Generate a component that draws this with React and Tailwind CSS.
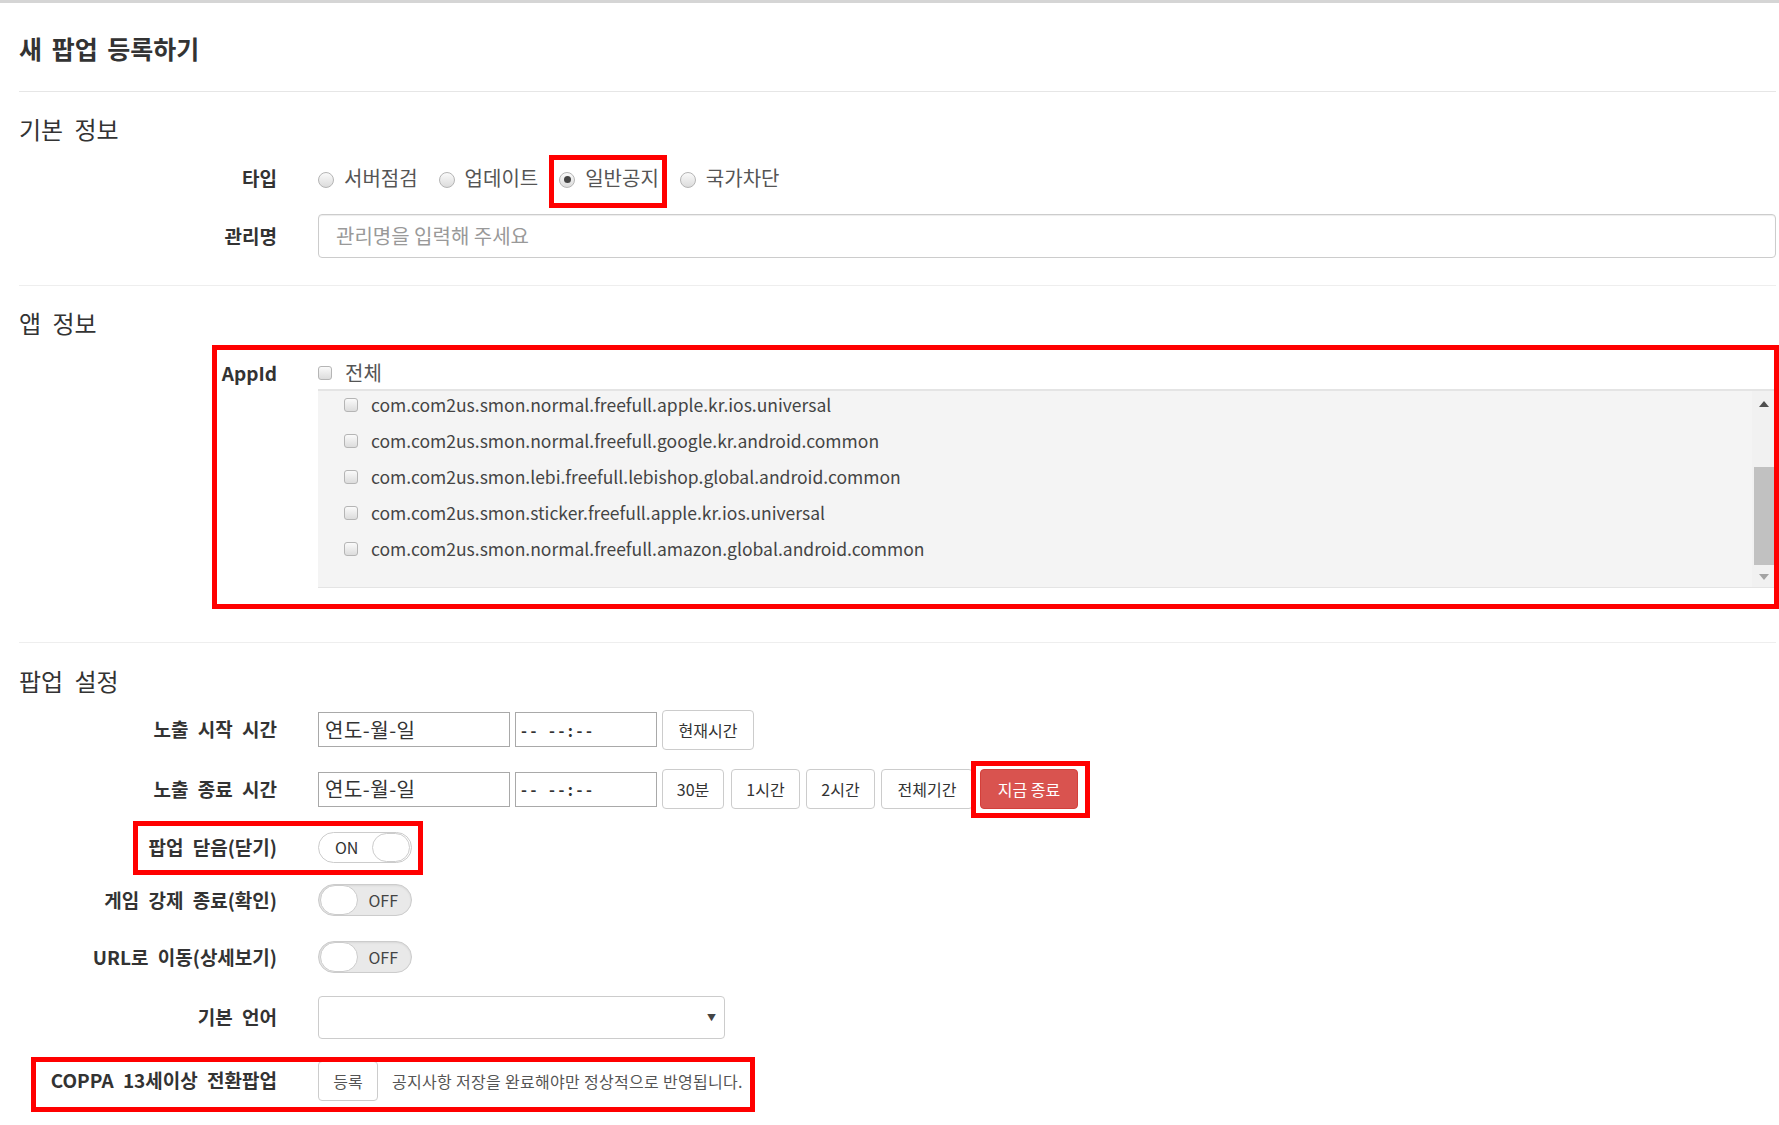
import { useState } from 'react';

const appIds = [
  'com.com2us.smon.normal.freefull.apple.kr.ios.universal',
  'com.com2us.smon.normal.freefull.google.kr.android.common',
  'com.com2us.smon.lebi.freefull.lebishop.global.android.common',
  'com.com2us.smon.sticker.freefull.apple.kr.ios.universal',
  'com.com2us.smon.normal.freefull.amazon.global.android.common',
];

function Radio({ checked }) {
  return (
    <span className="w-[16px] h-[16px] mt-[3px] rounded-full border border-[#b5b5b5] bg-gradient-to-b from-[#fafafa] to-[#dcdcdc] flex items-center justify-center shrink-0">
      {checked && <span className="w-[7px] h-[7px] rounded-full bg-[#444]" />}
    </span>
  );
}

function Check() {
  return (
    <span className="w-[14px] h-[14px] rounded-[3px] border border-[#b5b5b5] bg-gradient-to-b from-[#fafafa] to-[#dcdcdc] shrink-0" />
  );
}

function Toggle({ on }) {
  if (on) {
    return (
      <div className="w-[94px] h-[31px] rounded-full border border-[#ccc] bg-white flex items-center justify-between pl-[16px] pr-px">
        <span className="text-[16px] text-[#333]">ON</span>
        <span className="w-[38px] h-[29px] rounded-full border border-[#ccc] bg-white" />
      </div>
    );
  }
  return (
    <div className="w-[94px] h-[32px] rounded-full border border-[#ccc] bg-[#e9e9e9] flex items-center justify-between pl-px pr-[13px] shadow-[inset_0_1px_2px_rgba(0,0,0,0.08)]">
      <span className="w-[38px] h-[30px] rounded-full border border-[#ccc] bg-white" />
      <span className="text-[16px] text-[#444]">OFF</span>
    </div>
  );
}

function Row({ label, className = '', children }) {
  return (
    <div className={`flex items-center ${className}`}>
      <div className="w-[258px] shrink-0 text-right font-bold text-[19px] text-[#333] [word-spacing:5px]">{label}</div>
      <div className="ml-[41px] flex items-center flex-1">{children}</div>
    </div>
  );
}

function Btn({ children, className = '' }) {
  return (
    <button className={`h-[40px] shrink-0 whitespace-nowrap rounded-[4px] border border-[#ccc] bg-white text-[16px] text-[#333] ${className}`}>
      {children}
    </button>
  );
}

function DateInputs() {
  return (
    <>
      <div className="w-[192px] h-[35px] shrink-0 border border-[#a9a9a9] flex items-center px-[6px] text-[20px] text-[#333] tracking-[0.5px]">연도-월-일</div>
      <div className="w-[142px] h-[35px] shrink-0 ml-[5px] border border-[#a9a9a9] flex items-center px-[5px] text-[16px] font-bold text-[#333] tracking-[3.5px] [word-spacing:2px]">-- --:--</div>
    </>
  );
}

function Mark({ className }) {
  return <div className={`absolute border-[5px] border-[#ff0000] pointer-events-none ${className}`} />;
}

export default function App() {
  const [type] = useState('일반공지');

  return (
    <div className="relative min-h-screen bg-white border-t-[3px] border-[#d5d5d5] pl-[19px] pr-[3px] pb-[20px] text-[#333] font-['Noto_Sans_CJK_KR','Noto_Sans',sans-serif]">
      {/* Title */}
      <div className="h-[88px] flex items-center pt-[4px]">
        <h1 className="text-[25px] font-bold text-[#333] [word-spacing:4px]">새 팝업 등록하기</h1>
      </div>
      <div className="h-px bg-[#e6e6e6]" />

      {/* 기본 정보 */}
      <div className="h-[40px] mt-[17px] flex items-center text-[24px] text-[#333] [word-spacing:6px]">기본 정보</div>
      <Row label="타입" className="h-[40px] mt-[9px]">
        <div className="flex items-center">
          {['서버점검', '업데이트', '일반공지', '국가차단'].map((t) => (
            <label key={t} className="flex items-center mr-[21px]">
              <Radio checked={t === type} />
              <span className="ml-[10px] text-[20px] text-[#555]">{t}</span>
            </label>
          ))}
        </div>
      </Row>
      <Row label="관리명" className="h-[44px] mt-[16px]">
        <div className="flex-1 h-[44px] border border-[#ccc] rounded-[4px] flex items-center px-[17px] text-[20px] text-[#999] shadow-[inset_0_1px_1px_rgba(0,0,0,0.075)]">
          관리명을 입력해 주세요
        </div>
      </Row>
      <div className="h-px bg-[#eee] mt-[27px]" />

      {/* 앱 정보 */}
      <div className="h-[40px] mt-[17px] flex items-center text-[24px] text-[#333] [word-spacing:6px]">앱 정보</div>
      <div className="flex mt-[16px]">
        <div className="w-[258px] shrink-0 text-right font-bold text-[19px] text-[#333] h-[28px] leading-[28px]">AppId</div>
        <div className="ml-[41px] flex-1">
          <div className="h-[28px] flex items-center">
            <Check />
            <span className="ml-[13px] text-[20px] text-[#555]">전체</span>
          </div>
          <div className="mt-[2px] h-[199px] bg-[#f4f4f4] border-t-2 border-b border-[#e4e4e4] flex">
            <div className="flex-1 -mt-[4px] pl-[26px]">
              {appIds.map((id) => (
                <div key={id} className="h-[36px] flex items-center">
                  <Check />
                  <span className="ml-[13px] text-[17.5px] text-[#444]">{id}</span>
                </div>
              ))}
            </div>
            <div className="w-[24px] bg-[#f1f1f1] flex flex-col items-center">
              <div className="h-[26px] flex items-center justify-center">
                <span className="w-0 h-0 border-l-[5px] border-r-[5px] border-b-[6px] border-l-transparent border-r-transparent border-b-[#505050]" />
              </div>
              <div className="mt-[50px] w-[20px] h-[98px] bg-[#c1c1c1]" />
              <div className="mt-[2px] h-[20px] flex items-center justify-center">
                <span className="w-0 h-0 border-l-[5px] border-r-[5px] border-t-[6px] border-l-transparent border-r-transparent border-t-[#a3a3a3]" />
              </div>
            </div>
          </div>
        </div>
      </div>
      <div className="h-px bg-[#eee] mt-[54px]" />

      {/* 팝업 설정 */}
      <div className="h-[40px] mt-[18px] flex items-center text-[24px] text-[#333] [word-spacing:6px]">팝업 설정</div>
      <Row label="노출 시작 시간" className="h-[39px] mt-[9px]">
        <DateInputs />
        <Btn className="ml-[5px] w-[92px] h-[39px]">현재시간</Btn>
      </Row>
      <Row label="노출 종료 시간" className="h-[40px] mt-[20px]">
        <DateInputs />
        <Btn className="ml-[5px] w-[62px]">30분</Btn>
        <Btn className="ml-[7px] w-[69px]">1시간</Btn>
        <Btn className="ml-[6px] w-[69px]">2시간</Btn>
        <Btn className="ml-[6px] w-[92px]">전체기간</Btn>
        <button className="ml-[7px] h-[40px] w-[98px] shrink-0 rounded-[4px] border border-[#d43f3a] bg-[#d9534f] text-white text-[16px]">지금 종료</button>
      </Row>
      <Row label="팝업 닫음(닫기)" className="h-[32px] mt-[22px]">
        <Toggle on />
      </Row>
      <Row label="게임 강제 종료(확인)" className="h-[32px] mt-[21px]">
        <Toggle on={false} />
      </Row>
      <Row label="URL로 이동(상세보기)" className="h-[32px] mt-[25px]">
        <Toggle on={false} />
      </Row>
      <Row label="기본 언어" className="h-[43px] mt-[23px]">
        <div className="w-[407px] h-[43px] border border-[#ccc] rounded-[4px] flex items-center justify-end pr-[8px] text-[9px] text-[#444]">▼</div>
      </Row>
      <Row label="COPPA 13세이상 전환팝업" className="h-[39px] mt-[22px]">
        <Btn className="w-[60px] h-[39px] text-[#555]">등록</Btn>
        <span className="ml-[14px] text-[16px] text-[#555] tracking-[0.3px]">공지사항 저장을 완료해야만 정상적으로 반영됩니다.</span>
      </Row>

      {/* annotation boxes */}
      <Mark className="left-[549px] top-[152px] w-[118px] h-[53px]" />
      <Mark className="left-[212px] top-[342px] w-[1567px] h-[264px]" />
      <Mark className="left-[971px] top-[758px] w-[119px] h-[57px]" />
      <Mark className="left-[133px] top-[818px] w-[290px] h-[54px]" />
      <Mark className="left-[31px] top-[1054px] w-[724px] h-[55px]" />
    </div>
  );
}
